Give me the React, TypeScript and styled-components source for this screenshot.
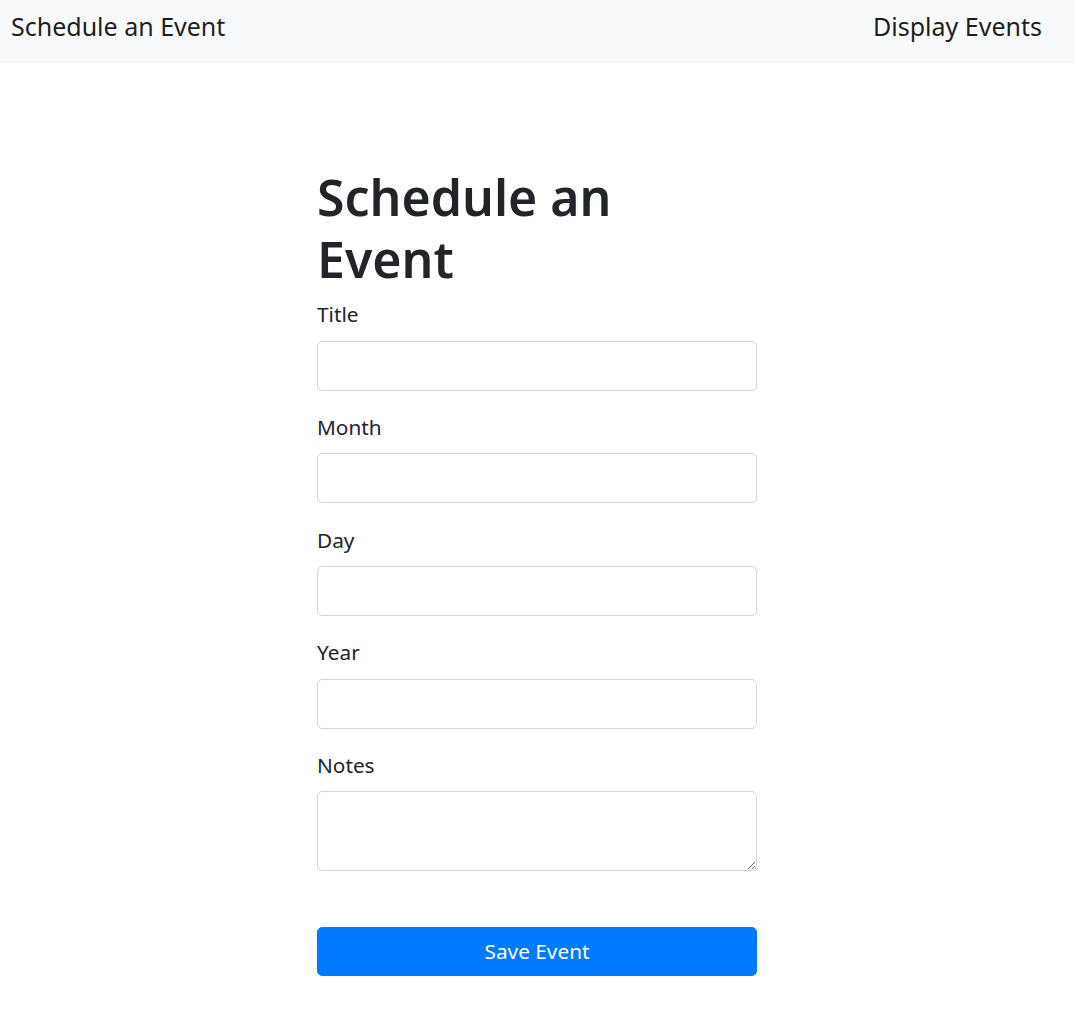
import React from "react";
import styled, { createGlobalStyle } from "styled-components";

const Global = createGlobalStyle`
  * { box-sizing: border-box; }
  html, body { margin: 0; padding: 0; background: #fff; }
  body {
    font-family: "Noto Sans", "Open Sans", sans-serif;
    font-size: 20.8px;
    line-height: 1.5;
    color: #212529;
  }
`;

const NavBar = styled.nav`
  height: 63px;
  background: #f8f9fa;
  display: flex;
  align-items: center;
  justify-content: space-between;
  padding: 0 33px 0 11px;
`;

const NavLink = styled.a`
  font-size: 25px;
  color: rgba(0, 0, 0, 0.9);
  text-decoration: none;
  line-height: 1;
  margin-top: -11px;
  cursor: pointer;
`;

const Main = styled.main`
  width: 440px;
  margin-left: calc(50% - 220.5px);
  padding-top: 103px;
`;

const Heading = styled.h1`
  font-size: 50px;
  line-height: 62.4px;
  font-weight: 600;
  margin: 0 0 8.4px;
  max-width: 330px;
`;

const FormGroup = styled.div`
  margin-bottom: 21.1px;
`;

const Label = styled.label`
  display: block;
  margin-bottom: 10.4px;
`;

const fieldBase = `
  display: block;
  width: 100%;
  padding: 7.8px 15.6px;
  font: inherit;
  color: #495057;
  background: #fff;
  border: 1.3px solid #ced4da;
  border-radius: 5.2px;
  outline: none;
`;

const Input = styled.input`
  ${fieldBase}
  height: 50px;
`;

const TextArea = styled.textarea`
  ${fieldBase}
  height: 80px;
`;

const Spacer = styled.div`
  height: 34.9px;
`;

const Button = styled.button`
  display: block;
  width: 100%;
  height: 49px;
  font: inherit;
  color: #fff;
  background: #007bff;
  border: 1.3px solid #007bff;
  border-radius: 5.2px;
  cursor: pointer;
`;

const fields = ["Title", "Month", "Day", "Year"];

export default function App() {
  return (
    <>
      <Global />
      <NavBar>
        <NavLink>Schedule an Event</NavLink>
        <NavLink>Display Events</NavLink>
      </NavBar>
      <Main>
        <Heading>Schedule an Event</Heading>
        <form onSubmit={(e) => e.preventDefault()}>
          {fields.map((f) => (
            <FormGroup key={f}>
              <Label htmlFor={f}>{f}</Label>
              <Input id={f} type="text" />
            </FormGroup>
          ))}
          <FormGroup>
            <Label htmlFor="Notes">Notes</Label>
            <TextArea id="Notes" rows={2} />
          </FormGroup>
          <Spacer />
          <Button type="submit">Save Event</Button>
        </form>
      </Main>
    </>
  );
}
